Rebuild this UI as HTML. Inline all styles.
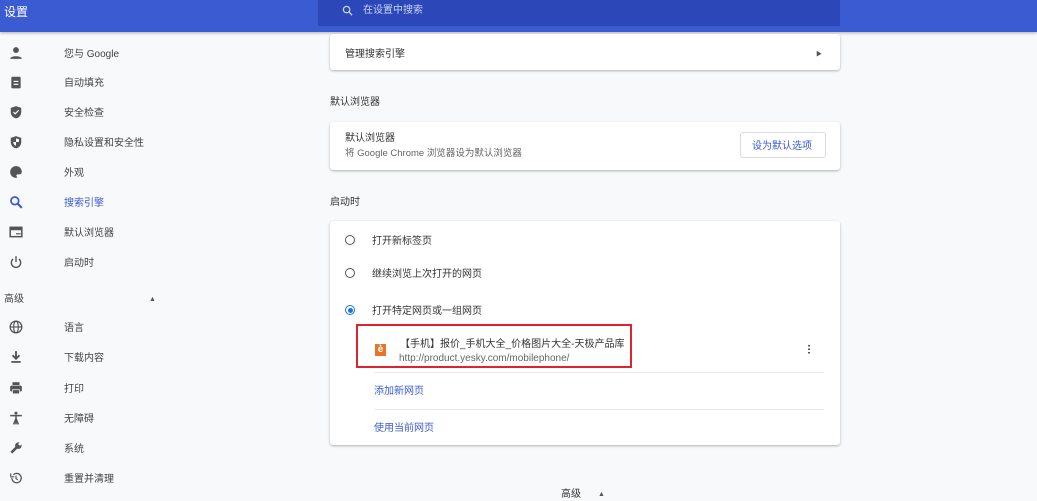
<!DOCTYPE html>
<html><head><meta charset="utf-8"><style>
body{margin:0;width:1037px;height:498px;overflow:hidden;background:#f8f9fa;font-family:"Liberation Sans","Noto Sans CJK SC",sans-serif;font-size:10px;line-height:12px;color:#333;position:relative}
.hdr{position:absolute;left:0;top:0;width:1037px;height:32px;background:#3b5bd2;box-shadow:0 1px 3px rgba(0,0,0,.3)}
.hdr .t{position:absolute;left:4px;top:5px;color:#fff;font-size:12px;line-height:14px}
.search{position:absolute;left:318px;top:0;width:522px;height:26px;background:#2c48b8;color:#c9d3f3;font-size:10px}
.search span{position:absolute;left:45px;top:5px}
.a{position:absolute;white-space:nowrap;margin-top:2px}
.si{position:absolute;left:64px;color:#444;margin-top:2px}
.ic{position:absolute;left:9px;width:14px;height:14px}
.card{position:absolute;left:330px;width:510px;background:#fff;border-radius:3px;box-shadow:0 1px 2px rgba(0,0,0,.2),0 1px 3px rgba(0,0,0,.1)}
.radio{position:absolute;left:345px;width:8px;height:8px;border:1.5px solid #555;border-radius:50%}
.link{color:#3a5bd1}
</style></head><body>
<div class="hdr"><div class="t">设置</div><div class="search"><svg style="position:absolute;left:24px;top:5px" width="11" height="11" viewBox="0 0 12 12"><circle cx="5" cy="5" r="3.5" fill="none" stroke="#c9d3f3" stroke-width="1.4"/><path d="M7.5 7.5L11 11" stroke="#c9d3f3" stroke-width="1.5"/></svg><span>在设置中搜索</span></div></div>

<svg class="ic" style="top:46px" viewBox="0 0 12 12"><circle cx="6" cy="3.5" r="2.5" fill="#555"/><path d="M1 11c0-3 10-3 10 0z" fill="#555"/></svg>
<div class="si" style="top:47px">您与 Google</div>
<svg class="ic" style="top:75px" viewBox="0 0 12 12"><rect x="2" y="1.5" width="8" height="10" rx="1" fill="#555"/><rect x="4" y="5" width="4" height="1" fill="#fff"/><rect x="4" y="7.5" width="4" height="1" fill="#fff"/></svg>
<div class="si" style="top:76px">自动填充</div>
<svg class="ic" style="top:105px" viewBox="0 0 12 12"><path d="M6 1L1.5 2.5v3.5c0 3 2 5 4.5 5.5 2.5-.5 4.5-2.5 4.5-5.5V2.5z" fill="#555"/><path d="M3.8 6l1.5 1.5 3-3" stroke="#fff" fill="none" stroke-width="1"/></svg>
<div class="si" style="top:106px">安全检查</div>
<svg class="ic" style="top:135px" viewBox="0 0 12 12"><path d="M6 1L1.5 2.5v3.5c0 3 2 5 4.5 5.5 2.5-.5 4.5-2.5 4.5-5.5V2.5z" fill="#555"/><path d="M6 3v3H3.5c.2 1.6 1.2 2.8 2.5 3.3V6h2.5V3.5z" fill="#fff"/></svg>
<div class="si" style="top:136px">隐私设置和安全性</div>
<svg class="ic" style="top:165px" viewBox="0 0 12 12"><path d="M6 1a5 5 0 000 10c1 0 1-1 .5-1.5s0-1.5 1-1.5H9a2 2 0 002-2C11 3 8.8 1 6 1z" fill="#555"/></svg>
<div class="si" style="top:166px">外观</div>
<svg class="ic" style="top:195px" viewBox="0 0 12 12"><circle cx="5" cy="5" r="3.3" fill="none" stroke="#3a5bd1" stroke-width="1.5"/><path d="M7.5 7.5L11 11" stroke="#3a5bd1" stroke-width="1.8"/></svg>
<div class="si link" style="top:196px">搜索引擎</div>
<svg class="ic" style="top:225px" viewBox="0 0 12 12"><rect x="1" y="2" width="10" height="8" fill="none" stroke="#555" stroke-width="1.3"/><rect x="1" y="2" width="10" height="2.5" fill="#555"/><rect x="6" y="7" width="4" height="1" fill="#555"/></svg>
<div class="si" style="top:226px">默认浏览器</div>
<svg class="ic" style="top:255px" viewBox="0 0 12 12"><path d="M3.5 3.5a4 4 0 105 0" fill="none" stroke="#555" stroke-width="1.2"/><path d="M6 1v5" stroke="#555" stroke-width="1.2"/></svg>
<div class="si" style="top:256px">启动时</div>
<div class="a" style="left:4px;top:292px;color:#444">高级</div>
<div class="a" style="left:149px;top:292px;font-size:7px;color:#555">▲</div>
<svg class="ic" style="top:320px" viewBox="0 0 12 12"><circle cx="6" cy="6" r="5" fill="none" stroke="#555" stroke-width="1.1"/><ellipse cx="6" cy="6" rx="2" ry="5" fill="none" stroke="#555"/><path d="M1 6h10" stroke="#555"/></svg>
<div class="si" style="top:321px">语言</div>
<svg class="ic" style="top:350px" viewBox="0 0 12 12"><path d="M6 1v6M3 4.5L6 7.5 9 4.5" fill="none" stroke="#555" stroke-width="1.6"/><rect x="2" y="9.5" width="8" height="1.5" fill="#555"/></svg>
<div class="si" style="top:351px">下载内容</div>
<svg class="ic" style="top:381px" viewBox="0 0 12 12"><rect x="3" y="1" width="6" height="2.5" fill="#555"/><rect x="1" y="4" width="10" height="5" rx="1" fill="#555"/><rect x="3" y="7.5" width="6" height="3.5" fill="#555" stroke="#fff" stroke-width=".6"/></svg>
<div class="si" style="top:382px">打印</div>
<svg class="ic" style="top:411px" viewBox="0 0 12 12"><circle cx="6" cy="1.8" r="1.3" fill="#555"/><path d="M1 4h10M6 4v7.5M4 11.5l2-5 2 5" fill="none" stroke="#555" stroke-width="1.3"/></svg>
<div class="si" style="top:412px">无障碍</div>
<svg class="ic" style="top:441px" viewBox="0 0 12 12"><path d="M2 10L7 5" stroke="#555" stroke-width="2.2"/><circle cx="8" cy="4" r="2.8" fill="#555"/><circle cx="9.3" cy="2.7" r="1.2" fill="#f8f9fa"/></svg>
<div class="si" style="top:442px">系统</div>
<svg class="ic" style="top:471px" viewBox="0 0 12 12"><path d="M2.5 6a4 4 0 101.2-2.8" fill="none" stroke="#555" stroke-width="1.1"/><path d="M1.5 2v3h3" fill="none" stroke="#555"/><path d="M6 4v2.5l1.5 1" fill="none" stroke="#555"/></svg>
<div class="si" style="top:472px">重置并清理</div>

<div class="card" style="top:34px;height:36px"></div>
<div class="a" style="left:345px;top:47px">管理搜索引擎</div>
<div class="a" style="left:816px;top:47px;font-size:6px;color:#555">▶</div>

<div class="a" style="left:330px;top:95px;color:#333">默认浏览器</div>
<div class="card" style="top:122px;height:48px"></div>
<div class="a" style="left:345px;top:131px">默认浏览器</div>
<div class="a" style="left:345px;top:146px;color:#666;font-size:9.5px">将 Google Chrome 浏览器设为默认浏览器</div>
<div style="position:absolute;left:740px;top:132px;width:86px;height:26px;box-sizing:border-box;border:1px solid #d8dce3;border-radius:3px"></div>
<div class="a link" style="left:752px;top:139px">设为默认选项</div>

<div class="a" style="left:330px;top:195px">启动时</div>
<div class="card" style="top:221px;height:224px"></div>
<div class="radio" style="top:235px"></div>
<div class="a" style="left:372px;top:234px">打开新标签页</div>
<div class="radio" style="top:268px"></div>
<div class="a" style="left:372px;top:267px">继续浏览上次打开的网页</div>
<div class="radio" style="top:305px;border-color:#1a73e8"><div style="position:absolute;left:1.5px;top:1.5px;width:5px;height:5px;border-radius:50%;background:#1a73e8"></div></div>
<div class="a" style="left:372px;top:304px">打开特定网页或一组网页</div>
<div style="position:absolute;left:356px;top:324px;width:276px;height:44px;border:2px solid #e0222d;box-sizing:border-box"></div>
<div style="position:absolute;left:375px;top:344px;width:11px;height:12px;background:#e8762a;color:#fff;font-size:10px;line-height:12px;text-align:center;font-weight:bold">è</div>
<div class="a" style="left:400px;top:337px">【手机】报价_手机大全_价格图片大全-天极产品库</div>
<div class="a" style="left:399px;top:351px;color:#666">http://product.yesky.com/mobilephone/</div>
<div style="position:absolute;left:808px;top:344px;width:2px;height:10px;background:radial-gradient(circle,#555 0.9px,transparent 1px) 0 0/2px 3.5px"></div>
<div style="position:absolute;left:374px;top:372px;width:450px;height:1px;background:#e8e8e8"></div>
<div class="a link" style="left:374px;top:384px">添加新网页</div>
<div style="position:absolute;left:374px;top:409px;width:450px;height:1px;background:#e8e8e8"></div>
<div class="a link" style="left:374px;top:421px">使用当前网页</div>

<div class="a" style="left:561px;top:487px">高级</div>
<div class="a" style="left:598px;top:487px;font-size:7px;color:#555">▲</div>
</body></html>
